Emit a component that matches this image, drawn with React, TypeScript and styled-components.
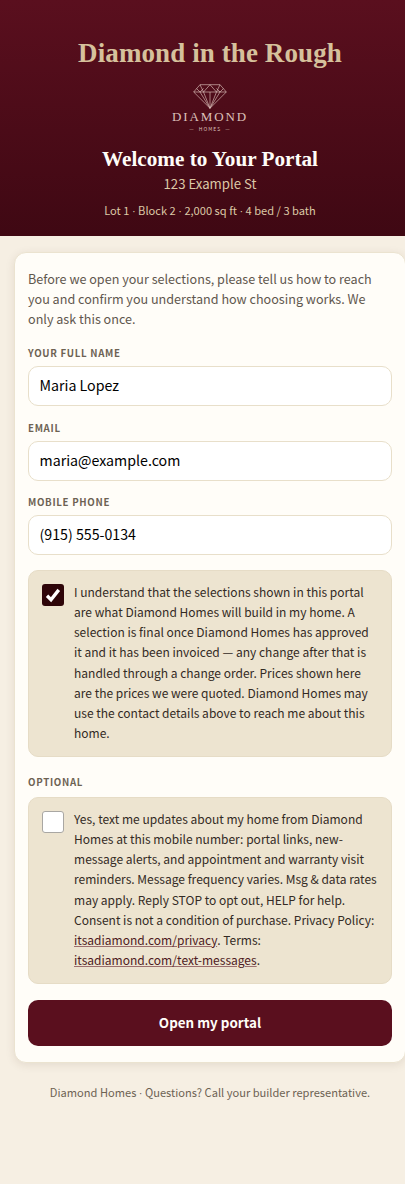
import React from 'react';
import styled, {createGlobalStyle} from 'styled-components';

const SANS = '"Noto Sans CJK JP", "Noto Sans", sans-serif';
const SERIF = '"Liberation Serif", "DejaVu Serif", serif';
const CHECK_MARK =
  "url(\"data:image/svg+xml,%3Csvg xmlns='http://www.w3.org/2000/svg' viewBox='0 0 21 21'%3E%3Cpath d='M4.8 11.2l3.8 3.8 7.4-9.4' fill='none' stroke='white' stroke-width='3.2'/%3E%3C/svg%3E\")";

const GlobalStyle = createGlobalStyle`
  html, body {
    margin: 0;
    padding: 0;
    background: #f6efe3;
    overflow-x: hidden;
  }
  * {
    box-sizing: border-box;
  }
`;

function DiamondMark() {
  return (
    <svg width="34" height="25" viewBox="0 0 34 25" fill="none" stroke="#dcc0ba" strokeWidth="0.65">
      <path d="M7 0.7H27L33.3 8L17 24.3L0.7 8Z" />
      <path d="M0.7 8H33.3" />
      <path d="M7 0.7L10.5 8L17 0.7L23.5 8L27 0.7" />
      <path d="M3.5 4.5L7 8L10.5 4.5M23.5 4.5L27 8L30.5 4.5" />
      <path d="M7 8L17 24.3L10.5 8M23.5 8L17 24.3L27 8M17 8V24.3" />
    </svg>
  );
}

export default function App() {
  return (
    <Page>
      <GlobalStyle />
      <Hero>
        <Brand>Diamond in the Rough</Brand>
        <Logo>
          <DiamondMark />
          <LogoName>DIAMOND</LogoName>
          <LogoSub>— HOMES —</LogoSub>
        </Logo>
        <Welcome>Welcome to Your Portal</Welcome>
        <Address>123 Example St</Address>
        <Specs>
          Lot 1 <Dot>·</Dot> Block 2 <Dot>·</Dot> 2,000 sq ft <Dot>·</Dot> 4 bed / 3 bath
        </Specs>
      </Hero>
      <Card>
        <Intro>
          Before we open your selections, please tell us how to reach you and
          confirm you understand how choosing works. We only ask this once.
        </Intro>
        <Field>
          <FieldLabel>Your full name</FieldLabel>
          <TextInput type="text" defaultValue="Maria Lopez" />
        </Field>
        <Field>
          <FieldLabel>Email</FieldLabel>
          <TextInput type="email" defaultValue="maria@example.com" />
        </Field>
        <Field>
          <FieldLabel>Mobile phone</FieldLabel>
          <TextInput type="tel" defaultValue="(915) 555-0134" />
        </Field>
        <ConsentBox $first>
          <Check type="checkbox" defaultChecked />
          <ConsentText>
            I understand that the selections shown in this portal are what
            Diamond Homes will build in my home. A selection is final once
            Diamond Homes has approved it and it has been invoiced — any change
            after that is handled through a change order. Prices shown here are
            the prices we were quoted. Diamond Homes may use the contact details
            above to reach me about this home.
          </ConsentText>
        </ConsentBox>
        <OptionalLabel>Optional</OptionalLabel>
        <ConsentBox>
          <Check type="checkbox" />
          <ConsentText>
            Yes, text me updates about my home from Diamond Homes at this mobile
            number: portal links, new-message alerts, and appointment and
            warranty visit reminders. Message frequency varies. Msg &amp; data
            rates may apply. Reply STOP to opt out, HELP for help. Consent is
            not a condition of purchase. Privacy Policy:{' '}
            <PolicyLink href="#privacy">itsadiamond.com/privacy</PolicyLink>.
            Terms:{' '}
            <PolicyLink href="#terms">itsadiamond.com/text-messages</PolicyLink>.
          </ConsentText>
        </ConsentBox>
        <Submit type="button">Open my portal</Submit>
      </Card>
      <Footer>
        Diamond Homes <Dot>·</Dot> Questions? Call your builder representative.
      </Footer>
    </Page>
  );
}

const Page = styled.div`
  width: 420px;
  min-height: 1184px;
  background: #f6efe3;
  font-family: ${SANS};
`;
const Hero = styled.header`
  height: 236px;
  padding-top: 35px;
  display: flex;
  flex-direction: column;
  align-items: center;
  background: linear-gradient(180deg, #5a0f1e 0%, #3f0813 100%);
  text-align: center;
`;
const Brand = styled.h1`
  margin: 0;
  font-family: ${SERIF};
  font-size: 27px;
  line-height: 36px;
  font-weight: 700;
  letter-spacing: 0.1px;
  color: #d6c19c;
`;
const Logo = styled.div`
  margin-top: 13px;
  height: 50px;
  display: flex;
  flex-direction: column;
  align-items: center;
`;
const LogoName = styled.div`
  margin-top: 1px;
  font-family: ${SERIF};
  font-size: 13px;
  line-height: 14px;
  letter-spacing: 1.9px;
  color: #dcc0ba;
`;
const LogoSub = styled.div`
  margin-top: 1px;
  font-size: 5px;
  line-height: 8px;
  letter-spacing: 1px;
  word-spacing: 2px;
  color: #dcc0ba;
`;
const Welcome = styled.h2`
  margin: 11px 0 0;
  font-family: ${SERIF};
  font-size: 21.2px;
  line-height: 28px;
  font-weight: 700;
  color: #fffdf8;
`;
const Address = styled.div`
  margin-top: 1px;
  font-size: 13.2px;
  line-height: 20px;
  color: #dcc8a6;
`;
const Specs = styled.div`
  margin-top: 6px;
  font-size: 11.1px;
  line-height: 20px;
  color: #dcc8a6;
`;
const Dot = styled.span`
  font-family: "Liberation Sans", sans-serif;
`;
const Card = styled.main`
  margin: 16px 14px 0;
  padding: 16px 13px 16px;
  background: #fffdf8;
  border: 1px solid #ebe3d0;
  border-radius: 12px;
  box-shadow: 0 2px 10px rgba(70, 40, 20, 0.1);
`;
const Intro = styled.p`
  margin: 0 0 16px;
  font-size: 12.6px;
  line-height: 20px;
  color: #5f574e;
`;
const Field = styled.label`
  display: block;
  margin-bottom: 13.5px;
`;
const FieldLabel = styled.div`
  margin-bottom: 5px;
  font-size: 9.7px;
  line-height: 16px;
  font-weight: 700;
  letter-spacing: 0.7px;
  text-transform: uppercase;
  color: #6d6253;
`;
const TextInput = styled.input`
  display: block;
  width: 100%;
  height: 40px;
  padding: 0 10.5px 2px;
  border: 1px solid #e8dfca;
  border-radius: 10px;
  background: #fff;
  font-family: ${SANS};
  font-size: 14.2px;
  color: #000;
  outline: none;
`;
const ConsentBox = styled.label<{$first?: boolean}>`
  display: flex;
  gap: 10.5px;
  margin-top: ${props => (props.$first ? '15px' : '0')};
  padding: 10.5px 13px 12.5px 13px;
  background: #ede4d0;
  border: 1px solid #e6dcc6;
  border-radius: 10px;
`;
const Check = styled.input`
  flex: none;
  appearance: none;
  width: 21.5px;
  height: 21.5px;
  margin: 2.5px 0 0;
  border: 1.5px solid #a9a7a3;
  border-radius: 3px;
  background: #fff;
  &:checked {
    border: none;
    background: #2e0509 ${CHECK_MARK} center / 100% no-repeat;
  }
`;
const ConsentText = styled.span`
  font-size: 12.03px;
  line-height: 20.25px;
  color: #332a24;
`;
const OptionalLabel = styled(FieldLabel)`
  margin: 17px 0 7px;
`;
const PolicyLink = styled.a`
  color: #4d1a22;
  text-decoration: underline;
  text-decoration-color: rgba(90, 15, 30, 0.55);
`;
const Submit = styled.button`
  display: block;
  width: 100%;
  height: 46px;
  margin-top: 16px;
  padding-bottom: 4px;
  border: none;
  border-radius: 10px;
  background: #5a0f1e;
  font-family: ${SANS};
  font-size: 13.4px;
  font-weight: 700;
  color: #fffdf8;
`;
const Footer = styled.footer`
  margin-top: 20px;
  text-align: center;
  font-size: 11.1px;
  line-height: 18px;
  color: #6d6253;
`;
